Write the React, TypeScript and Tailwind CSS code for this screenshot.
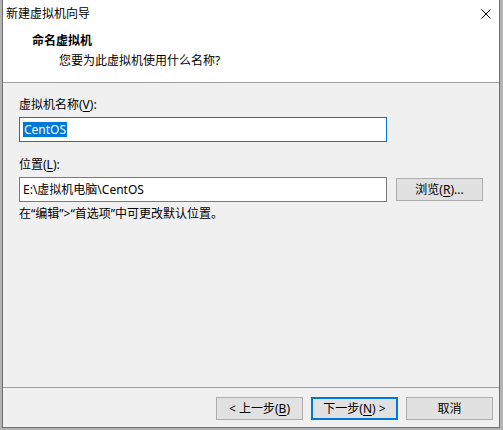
import React from "react";

const font = { fontFamily: '"Noto Sans", "Noto Sans CJK SC", sans-serif' };

// Windows-style push button
const WinButton = ({
  children,
  focused = false,
  className = "",
}: {
  children: React.ReactNode;
  focused?: boolean;
  className?: string;
}) => (
  <button
    type="button"
    className={
      "flex items-center justify-center h-[23px] bg-[#e1e1e1] text-[12px] leading-[16px] text-black " +
      (focused ? "border-2 border-[#0078d7] " : "border border-[#adadad] ") +
      className
    }
  >
    {children}
  </button>
);

const Key = ({ k }: { k: string }) => <u className="underline-offset-[2px]">{k}</u>;

export default function App() {
  return (
    <div className="w-[503px] h-[430px] bg-[#b4b4b4] pl-[2px] overflow-hidden" style={font}>
      <div className="w-[498px] h-[428px] bg-white border-x border-b border-[#6f6f6f] flex flex-col">
        {/* title bar */}
        <div className="h-[27px] flex items-center justify-between pl-[3px] pr-[8px]">
          <span className="text-[12px] leading-[16px] text-black">新建虚拟机向导</span>
          <svg width="10" height="10" viewBox="0 0 10 10" className="mt-[1px]">
            <path d="M0.5 0.5 L9.5 9.5 M9.5 0.5 L0.5 9.5" stroke="#000" strokeWidth="1" />
          </svg>
        </div>

        {/* header */}
        <div className="h-[55px] pt-[6px]">
          <div className="pl-[29px] text-[12px] leading-[16px] font-bold text-black">命名虚拟机</div>
          <div className="pl-[56px] mt-[4px] text-[12px] leading-[16px] text-black">
            您要为此虚拟机使用什么名称?
          </div>
        </div>
        <div className="h-px bg-[#a0a0a0]" />

        {/* body */}
        <div className="flex-1 bg-[#f0f0f0] flex flex-col text-[12px] leading-[16px] text-black">
          <div className="pl-[16px] pt-[14px] flex flex-col">
            <div>
              虚拟机名称(<Key k="V" />):
            </div>
            <div className="mt-[4px] w-[368px] h-[25px] bg-white border border-[#0078d7] flex items-center pl-[3px]">
              <span className="bg-[#0078d7] text-white px-px leading-[15px]">CentOS</span>
            </div>

            <div className="mt-[15px]">
              位置(<Key k="L" />):
            </div>
            <div className="mt-[4px] flex items-start gap-[9px]">
              <div className="w-[368px] h-[25px] bg-white border border-[#7a7a7a] flex items-center pl-[3px]">
                E:\虚拟机电脑\CentOS
              </div>
              <WinButton className="w-[87px] mt-[1px]">
                浏览(<Key k="R" />)...
              </WinButton>
            </div>

            <div className="mt-[4px]">在“编辑”&gt;“首选项”中可更改默认位置。</div>
          </div>

          <div className="flex-1" />
          <div className="h-px bg-[#a0a0a0]" />
          <div className="h-[39px] pt-[9px] pr-[6px] flex justify-end gap-[8px]">
            <WinButton className="w-[87px]">
              &lt; 上一步(<Key k="B" />)
            </WinButton>
            <WinButton focused className="w-[87px]">
              下一步(<Key k="N" />) &gt;
            </WinButton>
            <WinButton className="w-[87px]">取消</WinButton>
          </div>
        </div>
      </div>
    </div>
  );
}
